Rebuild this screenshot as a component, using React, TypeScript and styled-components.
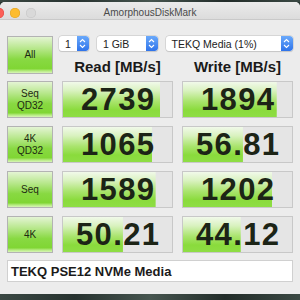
import React from "react";
import styled, { createGlobalStyle } from "styled-components";

const GlobalStyle = createGlobalStyle`
  html, body {
    margin: 0;
    padding: 0;
  }
  body {
    width: 300px;
    height: 300px;
    overflow: hidden;
    font-family: "Liberation Sans", Arial, sans-serif;
    background: #2b3733;
  }
`;

type Row = {
  label: string[];
  read: string;
  readPct: number;
  write: string;
  writePct: number;
};

const rows: Row[] = [
  { label: ["Seq", "QD32"], read: "2739", readPct: 89, write: "1894", writePct: 86 },
  { label: ["4K", "QD32"], read: "1065", readPct: 82, write: "56.81", writePct: 55 },
  { label: ["Seq"], read: "1589", readPct: 85, write: "1202", writePct: 82 },
  { label: ["4K"], read: "50.21", readPct: 55, write: "44.12", writePct: 53 },
];

const Screen = styled.div`
  display: flex;
  flex-direction: column;
  width: 300px;
  height: 300px;
`;

const Desktop = styled.div<{ $h: number }>`
  height: ${({ $h }) => $h}px;
  flex: none;
  background: linear-gradient(90deg, #3a4843 0%, #27322f 25%, #46554f 50%, #222c29 75%, #3b4944 100%);
`;

const Window = styled.div`
  flex: 1;
  display: flex;
  flex-direction: column;
  background: #ececec;
  border-radius: 5px 5px 0 0;
  overflow: hidden;
`;

const TitleBar = styled.div`
  position: relative;
  height: 16px;
  padding-top: 1px;
  display: flex;
  align-items: center;
  justify-content: center;
  background: linear-gradient(#ebebeb, #dcdcdc);
  border-bottom: 1px solid #c9c9c9;
`;

const Lights = styled.div`
  position: absolute;
  left: -6px;
  top: 6px;
  display: flex;
  gap: 6px;
`;

const Light = styled.span<{ $c: string; $b: string }>`
  width: 10px;
  height: 10px;
  border-radius: 50%;
  background: ${({ $c }) => $c};
  box-shadow: inset 0 0 0 0.5px ${({ $b }) => $b};
`;

const Title = styled.div`
  font-size: 10px;
  color: #4a4a4a;
  margin-top: 2px;
`;

const Content = styled.div`
  flex: 1;
  padding: 16px 7px 12px;
  display: flex;
  flex-direction: column;
`;

const TopArea = styled.div`
  display: grid;
  grid-template-columns: 46px 111px 111px;
  grid-template-rows: 15px 23px;
  column-gap: 9px;
`;

const greenButton = `
  border: 1px solid #b3b3b3;
  box-sizing: border-box;
  background: linear-gradient(#e4f4d4 0%, #bae890 30%, #88d942 62%, #80d634 88%, #b4ea7e 94%, #d8f5b8 100%);
  color: #1d2a12;
  font-size: 10px;
  line-height: 11.5px;
  display: flex;
  flex-direction: column;
  align-items: center;
  justify-content: center;
`;

const AllButton = styled.div`
  grid-row: 1 / span 2;
  ${greenButton}
`;

const Selects = styled.div`
  grid-column: 2 / span 2;
  margin-left: -3px;
  display: flex;
  gap: 8px;
`;

const Select = styled.div<{ $w: number }>`
  width: ${({ $w }) => $w}px;
  height: 15px;
  box-sizing: border-box;
  display: flex;
  align-items: center;
  background: #ffffff;
  border-radius: 3px;
  box-shadow: 0 0 0 0.5px #c4c4c4, 0 0.5px 1px rgba(0, 0, 0, 0.15);
  font-size: 10.5px;
  color: #222;
  padding-left: 6px;
  overflow: hidden;
`;

const Stepper = styled.span`
  margin-left: auto;
  width: 12px;
  height: 15px;
  flex: none;
  display: flex;
  align-items: center;
  justify-content: center;
  background: linear-gradient(#6aa9fb, #2f74ea);
  border-radius: 0 3px 3px 0;
`;

const Header = styled.div<{ $col: number }>`
  grid-row: 2;
  grid-column: ${({ $col }) => $col};
  align-self: start;
  margin-top: 7px;
  text-align: center;
  font-size: 15px;
  line-height: 17px;
  font-weight: bold;
  color: #1a1a1a;
`;

const Grid = styled.div`
  margin-top: 7px;
  display: grid;
  grid-template-columns: 46px 111px 111px;
  grid-auto-rows: 37px;
  column-gap: 9px;
  row-gap: 8px;
`;

const LabelButton = styled.div`
  ${greenButton}
`;

const Cell = styled.div`
  border: 1px solid #c8c8c8;
  box-sizing: border-box;
  background-color: #e5e5e5;
  background-image: linear-gradient(#f1f9ea 0%, #d9f2bf 25%, #aae46e 55%, #8adb3c 80%, #8edd44 100%);
  background-repeat: no-repeat;
  display: flex;
  align-items: center;
  justify-content: center;
`;

const Value = styled.span`
  font-size: 31px;
  line-height: 1;
  font-weight: bold;
  letter-spacing: 1.4px;
  margin-right: -1.4px;
  color: #1c2416;
`;

const NameBox = styled.div`
  margin-top: 7px;
  height: 22px;
  box-sizing: border-box;
  background: #ffffff;
  border: 1px solid #d0d0d0;
  padding-left: 3px;
  display: flex;
  align-items: center;
  font-size: 13px;
  font-weight: bold;
  color: #1a1a1a;
`;

const Chevrons = () => (
  <svg width="7" height="11" viewBox="0 0 7 11">
    <path d="M1 4 L3.5 1.5 L6 4 M1 7 L3.5 9.5 L6 7" fill="none" stroke="#fff" strokeWidth="1.1" />
  </svg>
);

export default function App() {
  return (
    <Screen>
      <GlobalStyle />
      <Desktop $h={2} />
      <Window>
        <TitleBar>
          <Lights>
            <Light $c="#fc5f57" $b="#df4744" />
            <Light $c="#fdbc2e" $b="#dea123" />
            <Light $c="#d9d9d9" $b="#c4c4c4" />
          </Lights>
          <Title>AmorphousDiskMark</Title>
        </TitleBar>
        <Content>
          <TopArea>
            <AllButton>All</AllButton>
            <Selects>
              <Select $w={30}>
                1<Stepper><Chevrons /></Stepper>
              </Select>
              <Select $w={61}>
                1 GiB<Stepper><Chevrons /></Stepper>
              </Select>
              <Select $w={128}>
                TEKQ Media (1%)<Stepper><Chevrons /></Stepper>
              </Select>
            </Selects>
            <Header $col={2}>Read [MB/s]</Header>
            <Header $col={3}>Write [MB/s]</Header>
          </TopArea>
          <Grid>
            {rows.map((r) => (
              <React.Fragment key={r.label.join("") + r.read}>
                <LabelButton>
                  {r.label.map((l) => (
                    <span key={l}>{l}</span>
                  ))}
                </LabelButton>
                <Cell style={{ backgroundSize: `${r.readPct}% 100%` }}>
                  <Value>{r.read}</Value>
                </Cell>
                <Cell style={{ backgroundSize: `${r.writePct}% 100%` }}>
                  <Value>{r.write}</Value>
                </Cell>
              </React.Fragment>
            ))}
          </Grid>
          <NameBox>TEKQ PSE12 NVMe Media</NameBox>
        </Content>
      </Window>
      <Desktop $h={6} />
    </Screen>
  );
}
